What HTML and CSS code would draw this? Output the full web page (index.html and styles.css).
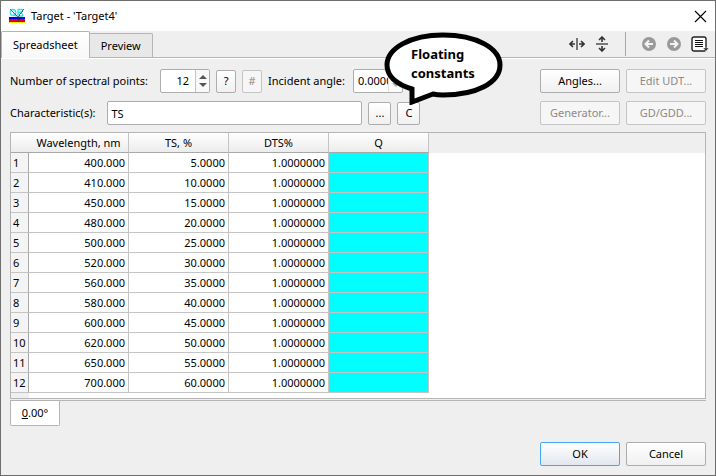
FILE: index.html
```html
<!DOCTYPE html>
<html lang="en">
<head>
<meta charset="utf-8">
<title>Target - 'Target4'</title>
<link rel="stylesheet" href="styles.css">
</head>
<body>
<main class="window">
  <header class="titlebar">
    <svg class="app-icon" viewBox="0 0 16 16" aria-hidden="true" shape-rendering="crispEdges">
      <rect y="9" width="16" height="3" fill="#0000e8"/>
      <rect y="11" width="16" height="3" fill="#e00018"/>
      <rect y="14" width="16" height="1" fill="#ffee00"/>
      <g fill="none" stroke="#2ce4ee" stroke-width="1.3" shape-rendering="auto">
        <ellipse cx="4" cy="4.500" rx="2.800" ry="3"/>
        <path d="M4.500 5.500l3 3M9 1v7M9 1.500h3.500q2 0 1 1.500l-3 1.500q4 1 3 3.500H9"/>
      </g>
      <path d="M1 1l8 8 6-8M9 9v5" fill="none" stroke="#333" stroke-width=".7"/>
    </svg>
    <h1 class="title">Target - 'Target4'</h1>
    <button class="close" aria-label="Close">
      <svg viewBox="0 0 10 10" aria-hidden="true"><path d="M0 0l10 10M10 0L0 10"/></svg>
    </button>
  </header>

  <div class="tabbar">
    <nav class="tabs" role="tablist">
      <button class="tab tab-active" role="tab" aria-selected="true">Spreadsheet</button>
      <button class="tab" role="tab" aria-selected="false">Preview</button>
    </nav>
    <div class="tools">
      <button class="tool" aria-label="Fit width">
        <svg viewBox="0 0 16 16" aria-hidden="true"><path d="M8 2v12" stroke="#777" stroke-width="2"/><path d="M1 8h5M10 8h5M4 5L1 8l3 3M12 5l3 3-3 3" stroke="#333" stroke-width="1.600"/></svg>
      </button>
      <button class="tool" aria-label="Fit height">
        <svg viewBox="0 0 16 16" aria-hidden="true"><path d="M2 8h12" stroke="#777" stroke-width="2"/><path d="M8 1v5M8 10v5M5 4l3-3 3 3M5 12l3 3 3-3" stroke="#333" stroke-width="1.600"/></svg>
      </button>
      <span class="separator"></span>
      <button class="tool" aria-label="Back" disabled>
        <svg viewBox="0 0 16 16" aria-hidden="true"><circle cx="8" cy="8" r="7" fill="#999"/><path d="M12 8H5M8 4.500L4.500 8 8 11.500" stroke="#f4f4f4" stroke-width="2"/></svg>
      </button>
      <button class="tool" aria-label="Forward" disabled>
        <svg viewBox="0 0 16 16" aria-hidden="true"><circle cx="8" cy="8" r="7" fill="#999"/><path d="M4 8h7M8 4.500L11.500 8 8 11.500" stroke="#f4f4f4" stroke-width="2"/></svg>
      </button>
      <button class="tool" aria-label="Menu">
        <svg class="menu-icon" viewBox="0 0 18 16" aria-hidden="true"><rect x="1" y="1" width="14" height="14" rx="2" fill="#fff" stroke="#222" stroke-width="1.400"/><path d="M4 4.500h8M4 6.500h8M4 8.500h8M4 10.500h8" stroke="#111" shape-rendering="crispEdges"/><path d="M12 12h6l-3 3z" fill="#222" stroke="#efefef" stroke-width=".5"/></svg>
      </button>
    </div>
  </div>

  <div class="page">
    <section class="form">
      <div class="fields">
        <div class="row">
          <label for="points">Number of spectral points:</label>
          <span class="spin">
            <input id="points" class="spin-input right" type="text" value="12">
            <span class="arrows" aria-hidden="true"><i class="up"></i><i class="down"></i></span>
          </span>
          <button class="btn small">?</button>
          <button class="btn small" disabled>#</button>
          <label for="angle">Incident angle:</label>
          <span class="spin spin-angle">
            <input id="angle" class="spin-input" type="text" value="0.0000">
            <span class="arrows faded" aria-hidden="true"><i class="up"></i><i class="down"></i></span>
          </span>
        </div>
        <div class="row">
          <label for="chars">Characteristic(s):</label>
          <input id="chars" class="text-input" type="text" value="TS">
          <button class="btn small wide">...</button>
          <button class="btn small wide">C</button>
        </div>
      </div>
      <div class="actions">
        <button class="btn">Angles...</button>
        <button class="btn" disabled>Edit UDT...</button>
        <button class="btn" disabled>Generator...</button>
        <button class="btn" disabled>GD/GDD...</button>
      </div>
      <div class="callout">
        <svg viewBox="0 0 120 74" aria-hidden="true"><path d="M28 58C12 53 3 45 3 34C3 17 27 4 59 4C92 4 116 17 116 34C116 52 92 64 59 64Q53 64 49 63L28 71Z" fill="#fff" stroke="#000" stroke-width="5"/></svg>
        <p class="callout-text">Floating<br>constants</p>
      </div>
    </section>

    <div class="sheet">
      <table class="grid">
        <colgroup><col class="col-index"><col class="col-data"><col class="col-data"><col class="col-data"><col class="col-data"></colgroup>
        <thead><tr><td></td><th scope="col">Wavelength, nm</th><th scope="col">TS, %</th><th scope="col">DTS%</th><th scope="col">Q</th></tr></thead>
        <tbody>
          <tr><th scope="row">1</th><td>400.000</td><td>5.0000</td><td>1.0000000</td><td class="q"></td></tr>
          <tr><th scope="row">2</th><td>410.000</td><td>10.0000</td><td>1.0000000</td><td class="q"></td></tr>
          <tr><th scope="row">3</th><td>450.000</td><td>15.0000</td><td>1.0000000</td><td class="q"></td></tr>
          <tr><th scope="row">4</th><td>480.000</td><td>20.0000</td><td>1.0000000</td><td class="q"></td></tr>
          <tr><th scope="row">5</th><td>500.000</td><td>25.0000</td><td>1.0000000</td><td class="q"></td></tr>
          <tr><th scope="row">6</th><td>520.000</td><td>30.0000</td><td>1.0000000</td><td class="q"></td></tr>
          <tr><th scope="row">7</th><td>560.000</td><td>35.0000</td><td>1.0000000</td><td class="q"></td></tr>
          <tr><th scope="row">8</th><td>580.000</td><td>40.0000</td><td>1.0000000</td><td class="q"></td></tr>
          <tr><th scope="row">9</th><td>600.000</td><td>45.0000</td><td>1.0000000</td><td class="q"></td></tr>
          <tr><th scope="row">10</th><td>620.000</td><td>50.0000</td><td>1.0000000</td><td class="q"></td></tr>
          <tr><th scope="row">11</th><td>650.000</td><td>55.0000</td><td>1.0000000</td><td class="q"></td></tr>
          <tr><th scope="row">12</th><td>700.000</td><td>60.0000</td><td>1.0000000</td><td class="q"></td></tr>
        </tbody>
      </table>
    </div>
    <div class="sheet-tabs"><button class="sheet-tab"><u>0</u>.00°</button></div>
  </div>

  <footer class="footer">
    <button class="btn primary">OK</button>
    <button class="btn">Cancel</button>
  </footer>
</main>
</body>
</html>
```
FILE: styles.css
```css
* { box-sizing: border-box; }

body {
  margin: 0;
  background: #efefef;
  color: #000;
  font: 11px/16px "Noto Sans", "Open Sans", sans-serif;
}

button, input { font: inherit; color: inherit; }
button { padding: 0; }

.window {
  display: flex;
  flex-direction: column;
  min-height: 100vh;
  border: 1px solid #6e6e6e;
}

.titlebar {
  display: flex;
  align-items: center;
  height: 30px;
  padding: 0 9px 0 8px;
  background: #fff;
}
.app-icon { width: 16px; height: 16px; }
.title { flex: 1; margin: 0 6px; font-size: 11px; font-weight: 400; }
.close { display: flex; border: 0; background: none; }
.close svg { width: 11px; height: 11px; overflow: visible; fill: none; stroke: #000; stroke-width: 1; }

.tabbar {
  display: flex;
  justify-content: space-between;
  height: 27px;
  border-bottom: 1px solid #b5b5b5;
}
.tabs { display: flex; align-items: flex-end; }
.tab {
  height: 24px;
  padding: 0 11px;
  border: 1px solid #b5b5b5;
  border-left: 0;
  border-bottom: 0;
  border-radius: 0 2px 0 0;
  background: #e8e8e8;
}
.tab-active {
  height: 27px;
  margin-bottom: -1px;
  border-left: 1px solid #b5b5b5;
  border-radius: 2px 2px 0 0;
  background: linear-gradient(#fff, #f8f8f8);
}

.tools { display: flex; align-items: center; gap: 9px; padding-right: 6px; }
.tool { display: flex; border: 0; background: none; }
.tool svg { width: 16px; height: 16px; fill: none; }
.tool .menu-icon { width: 18px; }
.separator { width: 1px; height: 24px; margin: 0 6px; background: #a8a8a8; }

.page { padding: 10px 9px 0; border-top: 1px solid #fff; }

.form {
  position: relative;
  display: flex;
  justify-content: space-between;
  margin-bottom: 7px;
}
.fields { display: flex; flex-direction: column; gap: 8px; }
.row { display: flex; align-items: center; height: 24px; }
.row > * { flex: none; }
.row > .btn, .row > .btn + label { margin-left: 6px; }

.text-input, .spin {
  height: 24px;
  border: 1px solid #adadad;
  border-radius: 2px;
  background: #fff;
}
.text-input { width: 255px; margin-left: 12px; padding: 0 3px; }
.spin { display: flex; width: 50px; margin-left: 12px; }
.row > .spin-angle { margin-left: 8px; }
.spin-input {
  flex: 1;
  min-width: 0;
  padding: 0 0 0 4px;
  border: 0;
  background: none;
}
.right { padding-right: 6px; text-align: right; }
.arrows {
  display: flex;
  flex-direction: column;
  align-items: center;
  justify-content: center;
  gap: 4px;
  width: 14px;
  border-left: 1px solid #c4c4c4;
  background: #f8f8f8;
}
.up, .down { border: 4px solid transparent; }
.up { border-top: 0; border-bottom-color: #555; }
.down { border-bottom: 0; border-top-color: #555; }
.faded { opacity: .5; }

.btn {
  width: 80px;
  height: 24px;
  border: 1px solid #adadad;
  border-radius: 2px;
  background: linear-gradient(#fff, #f0f0f0);
}
.btn:disabled { border-color: #c4c4c4; color: #8a8a8a; background: #f6f6f6; }
.small { width: 20px; height: 23px; }
.wide { width: 23px; }
.primary { border-color: #3fa9f5; background: linear-gradient(#fff, #e2e7ee); }

.actions { display: grid; grid-template-columns: 80px 80px; gap: 8px 6px; }

.callout { position: absolute; top: -38px; left: 374px; width: 120px; }
.callout svg { display: block; width: 120px; height: 74px; }
.callout-text {
  position: absolute;
  top: 14px;
  left: 27px;
  margin: 0;
  font: bold 13px/19px "Noto Sans", sans-serif;
}

.sheet {
  height: 267px;
  border: 1px solid #b5b5b5;
  background:
    linear-gradient(#efefef, #efefef) 0 0 / 18px 100% no-repeat,
    linear-gradient(#efefef 20px, #fff 20px);
}
.grid { border-collapse: separate; border-spacing: 0; table-layout: fixed; width: 418px; }
.col-index { width: 18px; }
.col-data { width: 100px; }
.grid td, .grid th {
  height: 20px;
  padding: 0 3px;
  border-right: 1px solid #c4c4c4;
  border-bottom: 1px solid #c4c4c4;
  line-height: 16px;
  font-weight: 400;
  white-space: nowrap;
}
.grid td { text-align: right; }
.grid tbody td { background: #fff; }
.grid thead th, .grid thead td { border-bottom-color: #a8a8a8; background: linear-gradient(#fff, #ececec); }
.grid thead td { border-right: 0; }
.grid tbody th { padding: 0 2px; border-right-color: #a8a8a8; background: #f4f4f4; text-align: left; }
.grid tbody .q { background: #0ff; }

.sheet-tabs { margin-top: 1px; border-top: 1px solid #b5b5b5; }
.sheet-tab {
  display: block;
  width: 50px;
  height: 25px;
  border: 1px solid #b5b5b5;
  border-top: 0;
  border-radius: 0 0 2px 2px;
  background: #fff;
}

.footer {
  display: flex;
  justify-content: flex-end;
  gap: 6px;
  margin-top: auto;
  padding: 0 9px 9px;
}
```
